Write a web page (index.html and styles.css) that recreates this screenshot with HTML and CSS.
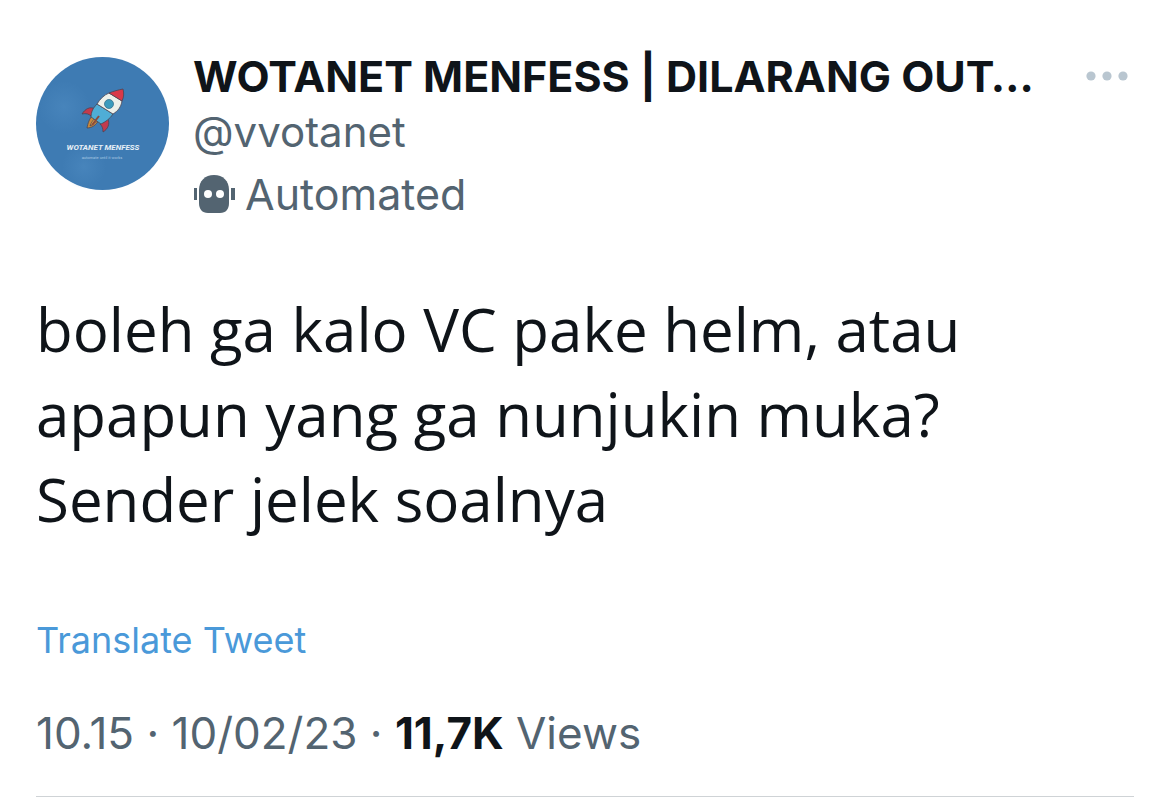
FILE: index.html
```html
<!DOCTYPE html>
<html lang="id">
<head>
    <meta charset="UTF-8">
    <meta name="viewport" content="width=device-width, initial-scale=1.0">
    <title>WOTANET MENFESS</title>
    <link rel="stylesheet" href="styles.css">
</head>
<body>
    <article class="tweet">
        <header class="tweet-header">
            <a href="#" class="avatar" aria-label="WOTANET MENFESS">
                <svg viewBox="0 0 133 133">
                    <defs>
                        <radialGradient id="light">
                            <stop offset="0" stop-color="#5592c8" stop-opacity=".4"/>
                            <stop offset="1" stop-color="#5592c8" stop-opacity="0"/>
                        </radialGradient>
                    </defs>
                    <circle cx="66.500" cy="66.500" r="66.500" fill="#3e7bb3"/>
                    <circle cx="28" cy="50" r="26" fill="url(#light)"/>
                    <circle cx="48" cy="110" r="22" fill="url(#light)"/>
                    <!-- rocket -->
                    <g stroke="#4a4554" stroke-width=".8" stroke-linejoin="round">
                        <path d="M59 52c-5-3-10 0-13 5 4-1 7 0 9 2z" fill="#c33a4d"/>
                        <path d="M72 62c2 5 0 10-5 13 0-4-1-6-3-8z" fill="#c33a4d"/>
                        <path d="M57 58c-4 4-5 8-6 13 5 0 9-3 12-8z" fill="#c98a3c"/>
                        <path d="M60 60c-3 3-5 6-6 9 3-1 6-4 8-7z" fill="#efb348"/>
                        <path d="M61 47l16 10c-3 5-8 8-12 10l-10-7c0-5 2-9 6-13z" fill="#4fadd6"/>
                        <path d="M73 36l13 8c-1 6-4 10-9 13L61 47c3-5 7-9 12-11z" fill="#edf0ea"/>
                        <path d="M73 36c5-2 9-3 14-4 1 4 1 8-1 12z" fill="#d93848"/>
                        <circle cx="73" cy="47" r="4.500" fill="#3b9bbd" stroke="#39718d"/>
                        <path d="M63 59l-7 9" fill="none" stroke="#8b4a3b" stroke-width="2"/>
                    </g>
                    <text x="67" y="93" class="avatar-name">WOTANET MENFESS</text>
                    <text x="66" y="102" class="avatar-note">automate until it works</text>
                </svg>
            </a>
            <div class="author">
                <div class="name-row">
                    <h1 class="name">WOTANET MENFESS | DILARANG OUT…</h1>
                    <button type="button" class="more" aria-label="More">
                        <svg viewBox="0 0 42 10">
                            <circle cx="5" cy="5" r="4.600"/>
                            <circle cx="21" cy="5" r="4.600"/>
                            <circle cx="37" cy="5" r="4.600"/>
                        </svg>
                    </button>
                </div>
                <a href="#" class="handle">@vvotanet</a>
                <div class="automated">
                    <svg viewBox="0 0 42 38">
                        <path d="M6 15C6 6 12 0 21 0s15 6 15 15v13c0 6-3 10-9 10H15c-6 0-9-4-9-10z"/>
                        <path d="M1 13h3v12H1zM38 13h4v12h-4z"/>
                        <circle cx="15" cy="19" r="4" class="eye"/>
                        <circle cx="27" cy="19" r="4" class="eye"/>
                    </svg>
                    <span>Automated</span>
                </div>
            </div>
        </header>

        <p class="tweet-text">boleh ga kalo VC pake helm, atau<br>apapun yang ga nunjukin muka?<br>Sender jelek soalnya</p>

        <a href="#" class="translate">Translate Tweet</a>

        <p class="meta">10.15 · 10/02/23 · <strong>11,7K</strong> Views</p>
    </article>
</body>
</html>
```
FILE: styles.css
```css
* { box-sizing: border-box; }
body { margin: 0; background-color: #fff; color: #0f1419; font-family: Inter, "Liberation Sans", sans-serif; }
a { text-decoration: none; }
.tweet { margin: 0 36px; padding-top: 48px; border-bottom: 1px solid #cfd3d6; }
.tweet-header { display: flex; gap: 24px; }
.avatar { flex: none; width: 133px; height: 133px; margin-top: 9px; }
.avatar svg { display: block; width: 100%; height: 100%; }
.avatar-name { font: italic bold 8px Roboto, sans-serif; fill: #e6eff6; text-anchor: middle; }
.avatar-note { font: 4px Roboto, sans-serif; fill: #a9c8e2; text-anchor: middle; }
.author { flex: 1; min-width: 0; }
.name-row { display: flex; align-items: center; justify-content: space-between; }
.name { margin: 0; font-size: 43px; line-height: 56px; font-weight: 700; white-space: nowrap; }
.more { flex: none; margin-right: 6px; padding: 0; border: none; background: none; cursor: pointer; }
.more svg { display: block; width: 42px; height: 10px; fill: #b9c6d0; }
.handle { display: block; color: #536471; font-size: 42px; line-height: 56px; }
.automated { display: flex; align-items: center; gap: 10px; margin-top: 6px; color: #536471; font-size: 43px; line-height: 56px; }
.automated svg { width: 42px; height: 38px; fill: #536471; }
.automated .eye { fill: #fff; }
.tweet-text { margin: 65px 0 0; font-family: "Open Sans", sans-serif; font-size: 60px; line-height: 85px; font-weight: 400; }
.translate { display: block; width: fit-content; margin-top: 74px; color: #4a99d9; font-size: 36px; line-height: 48px; }
.meta { margin: 0; padding: 41px 0 35px; color: #536471; font-size: 44px; line-height: 56px; }
.meta strong { color: #0f1419; font-weight: 700; }
```
